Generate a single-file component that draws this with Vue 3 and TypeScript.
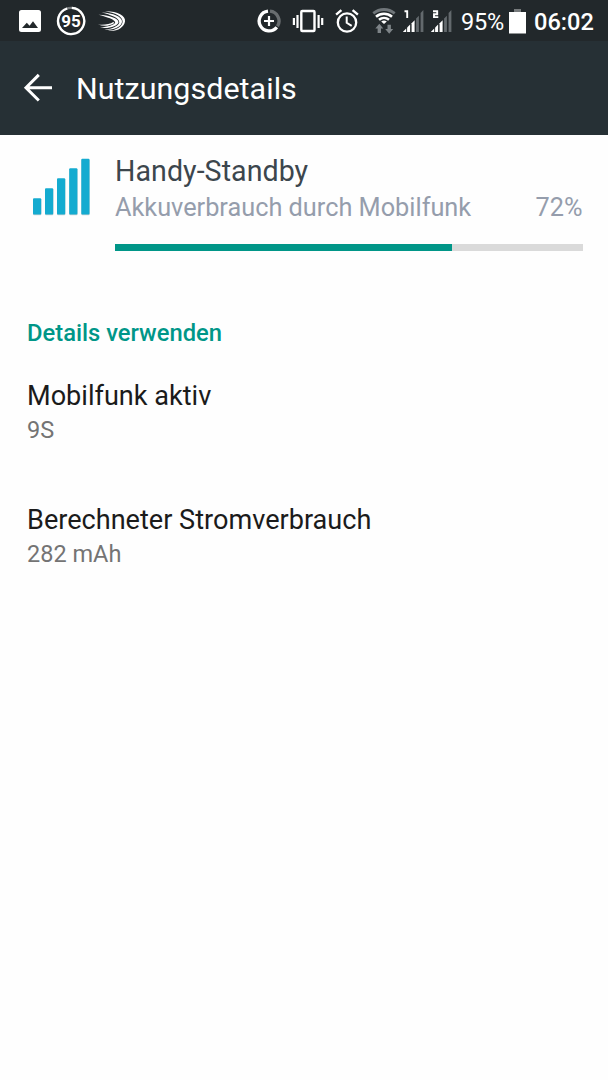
<script setup lang="ts">
interface Detail {
  title: string
  value: string
}

const details: Detail[] = [
  { title: 'Mobilfunk aktiv', value: '9S' },
  { title: 'Berechneter Stromverbrauch', value: '282 mAh' },
]
const usage = 72
const signals = ['1', '2']
const litBars = 3
const bars = [
  'M-.3 32l3.5-3.4V32z',
  'M4.1 32v-4.4l3-3V32z',
  'M8.6 32v-8.8l3-3V32z',
  'M13.1 32V18.6l2.8-2.8V32z',
  'M17.6 32V13l2.8-3V32z',
]
</script>

<template>
  <div class="screen">
    <header class="status">
      <svg class="photo" width="22" height="41" viewBox="0 0 22 41">
        <path fill="#fff" fill-rule="evenodd" d="M2.5 10h17a2.5 2.5 0 0 1 2.5 2.5v17a2.5 2.5 0 0 1-2.5 2.5h-17a2.5 2.5 0 0 1-2.5-2.5v-17A2.5 2.5 0 0 1 2.5 10zM3 28h16l-5-6.7-3.4 4.4-2.8-2.9z" />
      </svg>
      <svg class="level" width="30" height="41" viewBox="0 0 30 41">
        <circle cx="15" cy="21" r="13.1" fill="none" stroke="#777b7d" stroke-width="2.2" />
        <path d="M15.8 7.9A13.1 13.1 0 1 1 11.2 8.5" fill="none" stroke="#fff" stroke-width="2.3" />
        <text x="15" y="26.8" text-anchor="middle" class="level-text">95</text>
      </svg>
      <svg class="swift" width="28" height="41" viewBox="0 0 28 41" fill="#fff">
        <path d="M7 11.3C19 11 28 15.5 27 21.5C26 27.5 19 32 10 30.8C18 30.5 24 26.5 24.6 22C25 16.5 17 12.8 7 11.3z" />
        <path d="M3.5 12.6C15 13 24.5 17 24 22C23.2 26.6 16.5 30.6 6.5 29.5C14.5 28.8 20.5 25.8 21.3 22.4C21.5 18 12.5 14.8 3.5 12.6z" />
        <path d="M.5 14.8C11 15.4 20.8 18.2 20.5 22.4C19.5 26 11 29 2 27.5C9.5 27 16.5 25 17.2 22.8C17.5 19.5 8.5 17 .5 14.8z" />
        <path d="M0 24.6C6 25.2 12 24.3 15.3 22L16.4 23C12 26 6 26.8 0 24.6z" />
      </svg>

      <svg class="saver" width="24" height="41" viewBox="0 0 24 41" fill="none">
        <path d="M13 11.2A9.9 9.9 0 0 1 20.5 26.3" stroke="#696e70" stroke-width="3.3" />
        <path d="M11 11.2A9.9 9.9 0 1 0 19.8 27.2" stroke="#fff" stroke-width="3.3" />
        <path d="M12 16v10M7 21h10" stroke="#fff" stroke-width="2.2" />
      </svg>
      <svg class="vibrate" width="32" height="41" viewBox="0 0 32 41">
        <rect x="9.3" y="11" width="13.2" height="20" rx="1" fill="none" stroke="#fff" stroke-width="2.4" />
        <path d="M1.9 18v7M5.5 15v13M26.6 15v13M30.2 18v7" stroke="#fff" stroke-width="2.2" />
      </svg>
      <svg class="alarm" width="24" height="41" viewBox="0 0 24 41" fill="none" stroke="#fff">
        <circle cx="12" cy="22.5" r="9.2" stroke-width="2.3" />
        <path d="M1.1 14.7l5.3-4.5M22.9 14.7l-5.3-4.5" stroke-width="2.4" />
        <path d="M11.7 16.6v6.2l5 3.1" stroke-width="2" />
      </svg>
      <svg class="wifi" width="24" height="41" viewBox="0 0 24 41">
        <path d="M1.3 13.4C7.5 8.2 16.5 8.2 22.7 13.4" fill="none" stroke="#70767a" stroke-width="2.8" />
        <path d="M4 16.7C8.7 12.7 15.3 12.7 20 16.7M7 19.8C10 17.3 14 17.3 17 19.8" fill="none" stroke="#fff" stroke-width="2.6" />
        <path d="M9.2 21.4Q12 19.8 14.8 21.4L12 24z" fill="#fff" />
        <path d="M7.3 23.8l4 4.7H9V33H5.6v-4.5H3.3zM17.2 33.8l-4-4.7h2.3v-4.4h3.4v4.4h2.3z" fill="#7d8387" />
      </svg>
      <svg v-for="signal in signals" :key="signal" class="signal" width="21" height="41" viewBox="0 0 21 41">
        <path v-if="signal === '1'" d="M1.5 11.2h2.7V18" class="sim" />
        <path v-else d="M2 11.2h4.2v3.1H3v2.8h4.3" class="sim" />
        <path v-for="(bar, index) in bars" :key="bar" :d="bar" :fill="index < litBars ? '#fff' : '#63696d'" />
      </svg>
      <span class="percent">95%</span>
      <svg class="battery" width="17" height="41" viewBox="0 0 17 41">
        <path d="M5 9h7v3H5z" fill="#777b7d" />
        <path d="M0 12h17v21.5H0z" fill="#fff" />
      </svg>
      <span class="clock">06:02</span>
    </header>

    <nav class="toolbar">
      <svg class="back" width="30" height="30" viewBox="0 0 30 30" fill="none" stroke="#fff" stroke-width="3">
        <path d="M29 14.7H3M15.8 1.9L3 14.7l12.8 12.8" />
      </svg>
      <h1>Nutzungsdetails</h1>
    </nav>

    <main>
      <section class="summary">
        <svg class="mobile" width="60" height="60" viewBox="0 0 60 60">
          <g fill="#c8d0d2">
            <rect x="1" y="41" width="8.4" height="16.3" rx="1" />
            <rect x="13" y="31" width="8.4" height="26.3" rx="1" />
            <rect x="25" y="21" width="8.4" height="36.3" rx="1" />
            <rect x="37.2" y="11" width="8.4" height="46.3" rx="1" />
            <rect x="49.3" y="1.5" width="8.4" height="55.8" rx="1" />
          </g>
          <g fill="#14abd0">
            <rect x="1" y="40.2" width="8.2" height="16.2" rx="1" />
            <rect x="13" y="30.2" width="8.2" height="26.2" rx="1" />
            <rect x="25" y="20.2" width="8.2" height="36.2" rx="1" />
            <rect x="37.2" y="10.2" width="8.2" height="46.2" rx="1" />
            <rect x="49.3" y=".7" width="8.2" height="55.7" rx="1" />
          </g>
        </svg>
        <div class="info">
          <h2>Handy-Standby</h2>
          <div class="row">
            <span class="reason">Akkuverbrauch durch Mobilfunk</span>
            <span class="amount">{{ usage }}%</span>
          </div>
          <div class="track"><div class="fill" :style="{ width: usage + '%' }"></div></div>
        </div>
      </section>

      <h3>Details verwenden</h3>
      <article v-for="detail in details" :key="detail.title">
        <h4>{{ detail.title }}</h4>
        <p>{{ detail.value }}</p>
      </article>
    </main>
  </div>
</template>

<style>
body {
  margin: 0;
  background: #fefefe;
}
</style>

<style scoped>
.screen {
  width: 608px;
  height: 1080px;
  overflow: hidden;
  background: #fefefe;
  font-family: Roboto, "Noto Sans", sans-serif;
}
h1, h2, h3, h4, p { margin: 0; font-weight: 400; white-space: nowrap; }
svg { display: block; flex: none; }
.status {
  height: 41px;
  display: flex;
  background: #22282b;
  color: #fff;
}
.photo { margin-left: 19px; }
.level { margin-left: 15px; }
.level-text { font: 700 17px Roboto, sans-serif; fill: #fff; }
.swift { margin-left: 12px; }
.saver { margin-left: 131px; }
.vibrate { margin-left: 11px; }
.alarm { margin-left: 11px; }
.wifi { margin-left: 13px; }
.signal { margin-left: 7px; }
.sim { fill: none; stroke: #fff; stroke-width: 1.9; }
.percent {
  margin-left: 9px;
  width: 48px;
  font-size: 23.5px;
  letter-spacing: -0.2px;
  line-height: 44px;
}
.battery { flex: none; }
.clock {
  margin-left: 8px;
  font-size: 23.6px;
  font-weight: 500;
  line-height: 44px;
}
.toolbar {
  height: 94px;
  display: flex;
  align-items: center;
  background: #263035;
  color: #fff;
}
.back { margin-left: 23px; }
.toolbar h1 {
  margin-left: 23px;
  font-size: 30.4px;
  letter-spacing: 0.06px;
  line-height: 40px;
  padding-top: 2px;
}
.summary {
  display: flex;
  padding: 0 25px 0 32px;
}
.mobile { margin-top: 23px; }
.info { flex: 1; margin-left: 23px; }
h2 {
  padding-top: 18px;
  font-size: 28.6px;
  letter-spacing: 0.05px;
  line-height: 36px;
  color: #3c464d;
}
.row {
  display: flex;
  justify-content: space-between;
  margin-top: 1px;
  font-size: 25.3px;
  line-height: 36px;
  color: #959dac;
}
.amount { margin-right: 0.5px; }
.track {
  height: 7px;
  margin-top: 18px;
  background: #dadada;
}
.fill { height: 7px; background: #009688; }
h3 {
  margin: 66px 0 0 27px;
  font-size: 23.75px;
  font-weight: 500;
  line-height: 32px;
  color: #009688;
}
article {
  height: 124px;
  margin-left: 27px;
}
h3 + article { margin-top: 29px; }
h4 {
  font-size: 27.1px;
  line-height: 36px;
  color: #1b1b1b;
}
p {
  font-size: 23.5px;
  line-height: 32px;
  color: #747474;
}
</style>
